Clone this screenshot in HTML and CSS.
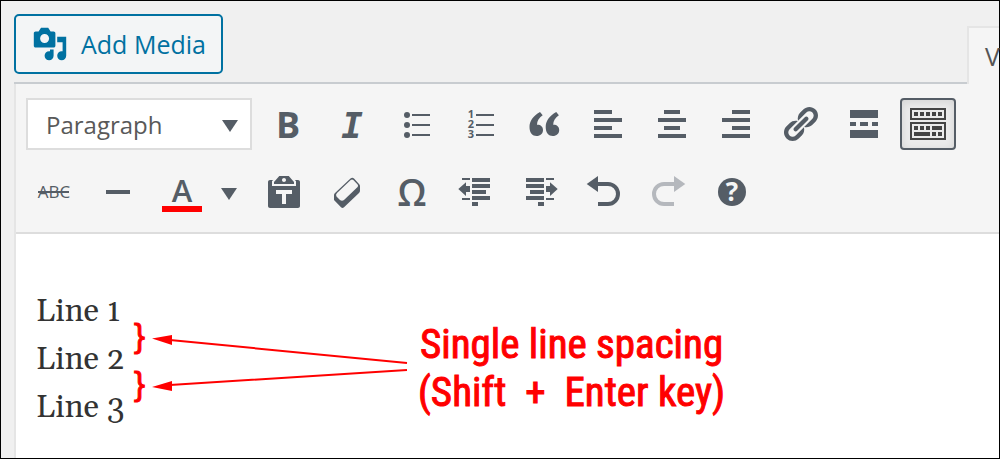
FILE: index.html
```html
<!DOCTYPE html>
<html lang="en">
<head>
<meta charset="utf-8">
<title>Editor</title>
<link rel="stylesheet" href="styles.css">
</head>
<body>
<main class="page">
  <header class="media-bar">
    <button class="add-media" type="button">
      <svg class="media-icon" viewBox="0 0 20 20" aria-hidden="true"><path d="M13 11V4c0-.55-.45-1-1-1h-1.67L9 1H5L3.67 3H2c-.55 0-1 .45-1 1v7c0 .55.45 1 1 1h10c.55 0 1-.45 1-1zM7 4.5c1.38 0 2.5 1.12 2.5 2.5S8.38 9.5 7 9.5 4.5 8.38 4.5 7 5.62 4.5 7 4.5zM14 6h5v10.5c0 1.38-1.12 2.5-2.5 2.5S14 17.88 14 16.5s1.12-2.5 2.5-2.5c.17 0 .34.02.5.05V9h-3V6zm-4 8.05V13h2v3.5c0 1.38-1.12 2.5-2.5 2.5S7 17.88 7 16.5 8.12 14 9.5 14c.17 0 .34.02.5.05z"/></svg>
      Add Media
    </button>
    <button class="tab" type="button">V</button>
  </header>
  <section class="editor">
    <div class="toolbar" role="toolbar" aria-label="Formatting">
      <div class="row">
        <div class="format">
          <select class="format-select" aria-label="Block format"><option>Paragraph</option></select>
          <svg class="format-arrow" viewBox="0 0 16 12" aria-hidden="true"><path d="M0 0h16L8 12z"/></svg>
        </div>
        <button class="tool" type="button" aria-label="Bold"><svg viewBox="0 0 40 40"><text class="glyph-bold" x="20" y="34">B</text></svg></button>
        <button class="tool" type="button" aria-label="Italic"><svg viewBox="0 0 40 40"><text class="glyph-italic" x="20" y="34">I</text></svg></button>
        <button class="tool" type="button" aria-label="Bulleted list"><svg viewBox="0 0 40 40"><circle cx="11" cy="11" r="3"/><circle cx="11" cy="21" r="3"/><circle cx="11" cy="31" r="3"/><path d="M16 10h18v2H16zM16 20h18v2H16zM16 30h18v2H16z"/></svg></button>
        <button class="tool" type="button" aria-label="Numbered list"><svg viewBox="0 0 40 40"><text class="glyph-number" x="11" y="14">1</text><text class="glyph-number" x="11" y="24">2</text><text class="glyph-number" x="11" y="34">3</text><path d="M16 10h18v2H16zM16 20h18v2H16zM16 30h18v2H16z"/></svg></button>
        <button class="tool" type="button" aria-label="Blockquote"><svg viewBox="0 0 40 40"><path d="M16 8C9 12 5.500 17 5.500 23C5.500 29 8.500 32 12.500 32C16.500 32 19 29.500 19 26C19 22.500 16.500 20.500 13 20.700C13 17 15 14 18.700 11.300ZM32.200 8C25.200 12 21.700 17 21.700 23C21.700 29 24.700 32 28.700 32C32.700 32 35.200 29.500 35.200 26C35.200 22.500 32.700 20.500 29.200 20.700C29.200 17 31.200 14 34.900 11.300Z"/></svg></button>
        <button class="tool" type="button" aria-label="Align left"><svg viewBox="0 0 40 40"><path d="M6 6h18v4H6zM6 14h28v4H6zM6 22h18v4H6zM6 30h28v4H6z"/></svg></button>
        <button class="tool" type="button" aria-label="Align center"><svg viewBox="0 0 40 40"><path d="M12 6h16v4H12zM6 14h28v4H6zM12 22h16v4H12zM6 30h28v4H6z"/></svg></button>
        <button class="tool" type="button" aria-label="Align right"><svg viewBox="0 0 40 40"><path d="M16 6h18v4H16zM6 14h28v4H6zM16 22h18v4H16zM6 30h28v4H6z"/></svg></button>
        <button class="tool" type="button" aria-label="Insert link"><svg viewBox="0 0 20 20"><path d="M17.740 2.760c1.680 1.690 1.680 4.410 0 6.100l-1.530 1.520c-1.120 1.120-2.700 1.470-4.140 1.090l2.620-2.610.76-.77.76-.76c.84-.84.84-2.200 0-3.040-.84-.85-2.200-.85-3.040 0l-.77.76-3.380 3.380c-.37-1.440-.02-3.020 1.100-4.140l1.520-1.530c1.690-1.680 4.420-1.680 6.100 0zM8.590 13.430l5.340-5.340c.42-.42.42-1.100 0-1.520-.44-.43-1.130-.39-1.530 0l-5.330 5.340c-.42.42-.42 1.100 0 1.520.44.43 1.130.39 1.520 0zm-.76 2.290l4.140-4.150c.38 1.440.03 3.020-1.090 4.140l-1.520 1.530c-1.690 1.680-4.410 1.680-6.100 0-1.680-1.680-1.680-4.420 0-6.100l1.530-1.520c1.120-1.120 2.700-1.470 4.140-1.100l-4.140 4.150c-.85.84-.85 2.200 0 3.050.84.84 2.200.84 3.040 0z"/></svg></button>
        <button class="tool" type="button" aria-label="Insert Read More tag"><svg viewBox="0 0 40 40"><path d="M6 6h28v8H6zM6 18h6v4H6zM16 18h8v4h-8zM28 18h6v4h-6zM6 26h28v8H6z"/></svg></button>
        <button class="tool tool-active" type="button" aria-label="Toolbar toggle" aria-pressed="true"><svg viewBox="0 0 40 40"><path fill-rule="evenodd" d="M2 4h36v12H2zM4 6v8h32V6zM2 18h36v18H2zM4 20v14h32V20z"/><path d="M6 8h4v4H6zM12 8h4v4h-4zM18 8h4v4h-4zM24 8h4v4h-4zM30 8h4v4h-4zM6 22h4v4H6zM12 22h4v4h-4zM18 22h4v4h-4zM24 22h10v4H24zM6 28h16v4H6zM24 28h4v4h-4zM30 28h4v4h-4z"/></svg></button>
      </div>
      <div class="row">
        <button class="tool" type="button" aria-label="Strikethrough"><svg viewBox="0 0 40 40"><text class="glyph-abc" x="20" y="26">ABC</text><path d="M4 19h31v2H4z"/></svg></button>
        <button class="tool" type="button" aria-label="Horizontal line"><svg viewBox="0 0 40 40"><path d="M8 18h24v4H8z"/></svg></button>
        <div class="color-group">
          <button class="tool" type="button" aria-label="Text color"><svg viewBox="0 0 40 40"><text class="glyph-color" x="20" y="30">A</text><path class="swatch" d="M0 34h40v6H0z"/></svg></button>
          <button class="color-menu" type="button" aria-label="Choose text color"><svg viewBox="0 0 16 40"><path d="M0 16h16L8 28z"/></svg></button>
        </div>
        <button class="tool" type="button" aria-label="Paste as text"><svg viewBox="0 0 20 20"><path d="M12.380 2L15 5v1H5V5l2.640-3h4.740zM10 5c.55 0 1-.44 1-1 0-.55-.45-1-1-1s-1 .45-1 1c0 .56.45 1 1 1zm5.450-1H17c.55 0 1 .45 1 1v12c0 .56-.45 1-1 1H3c-.55 0-1-.44-1-1V5c0-.55.45-1 1-1h1.550L4 4.630V7h12V4.630zM14 11V9H6v2h3v5h2v-5h3z"/></svg></button>
        <button class="tool" type="button" aria-label="Clear formatting"><svg viewBox="0 0 40 40"><path fill-rule="evenodd" d="M22.500 6.500L7 21Q6 22 6 23V28L13 35.300Q14.500 36.500 16 35.300L31 21Q32 20 32 18.500V14Q32 13 31 12L26 6.500Q24.300 5 22.500 6.500ZM9 21L22.700 8Q24 7 25.300 8L29.600 12.600Q30.600 14 29.600 15L16 28Q14 29.500 12 28L8.500 24.500Q7.300 22.800 9 21Z"/></svg></button>
        <button class="tool" type="button" aria-label="Special character"><svg viewBox="0 0 40 40"><text class="glyph-omega" x="20" y="34">Ω</text></svg></button>
        <button class="tool" type="button" aria-label="Decrease indent"><svg viewBox="0 0 40 40"><path d="M6 6h8v2H6zM6 26h8v2H6zM16 6h18v4H16zM16 12h18v4H16zM16 18h14v4H16zM16 24h18v4H16zM16 30h6v4h-6zM2.300 17L10 10.200V14h4v6h-4v4z"/></svg></button>
        <button class="tool" type="button" aria-label="Increase indent"><svg viewBox="0 0 40 40"><path d="M26 6h8v2h-8zM26 26h8v2h-8zM6 6h18v4H6zM6 12h18v4H6zM10 18h14v4H10zM6 24h18v4H6zM18 30h6v4h-6zM37.700 17L30 10.200V14h-4v6h4v4z"/></svg></button>
        <button class="tool" type="button" aria-label="Undo"><svg viewBox="0 0 40 40"><path d="M2.700 12L14 4v16z"/><path class="curve" d="M13 12H24a10 10 0 0 1 0 20H14"/></svg></button>
        <button class="tool tool-off" type="button" aria-label="Redo" disabled><svg viewBox="0 0 40 40"><path d="M37.300 12L26 4v16z"/><path class="curve" d="M26 12H16a10 10 0 0 0 0 20h10"/></svg></button>
        <button class="tool" type="button" aria-label="Keyboard shortcuts"><svg viewBox="0 0 40 40"><circle cx="20" cy="20" r="14"/><text class="glyph-help" x="20" y="29">?</text></svg></button>
      </div>
    </div>
    <div class="content">
      <p class="lines">Line 1<br>Line 2<br>Line 3</p>
      <div class="braces"><span>}</span><span>}</span></div>
      <svg class="arrows" viewBox="0 0 256 56" aria-hidden="true"><path class="shaft" d="M18 5L255 28M18 50L255 35"/><path d="M0 3.500L20 0v10zM0 52L20 46v10z"/></svg>
      <p class="note">Single line spacing<br>(Shift&nbsp; +&nbsp; Enter key)</p>
    </div>
  </section>
</main>
</body>
</html>
```
FILE: styles.css
```css
* {
  box-sizing: border-box;
}

body {
  margin: 0;
  font-family: "Open Sans", "Noto Sans", sans-serif;
}

button {
  margin: 0;
  padding: 0;
  border: 0;
  background: none;
  font: inherit;
}

svg {
  display: block;
  flex: none;
  overflow: visible;
}

.page {
  display: flex;
  flex-direction: column;
  min-height: 100vh;
  padding-left: 13px;
  border: 1px solid #000;
  background: #f0f0f0;
}

.media-bar {
  display: flex;
  justify-content: space-between;
  align-items: flex-end;
  padding-top: 13px;
  background: linear-gradient(#c8ccd0, #c8ccd0) bottom / 100% 2px no-repeat;
}

.add-media {
  display: flex;
  align-items: center;
  gap: 13px;
  height: 60px;
  margin-bottom: 10px;
  padding: 0 15px 0 16px;
  border: 2px solid #0071a1;
  border-radius: 5px;
  background: #f3f5f6;
  color: #0071a1;
  font-size: 25px;
  white-space: nowrap;
}

.media-icon {
  width: 36px;
  height: 36px;
  fill: #0071a1;
}

.tab {
  width: 32px;
  height: 58px;
  padding-left: 16px;
  border: solid #e5e5e5;
  border-width: 2px 0 0 2px;
  background: #f5f5f5;
  color: #555;
  font-size: 25px;
  text-align: left;
}

.editor {
  display: flex;
  flex: 1;
  flex-direction: column;
  border-left: 2px solid #e5e5e5;
  background: #fff;
}

.toolbar {
  display: flex;
  flex-direction: column;
  gap: 16px;
  padding: 14px 10px;
  border-bottom: 2px solid #ddd;
  background: #f5f5f5;
}

.row {
  display: flex;
  align-items: center;
  gap: 8px;
}

.format {
  position: relative;
  width: 226px;
}

.format-select {
  display: block;
  width: 100%;
  height: 52px;
  padding: 0 18px;
  border: 2px solid #ddd;
  border-radius: 0;
  appearance: none;
  background: #fff;
  color: #595959;
  font-family: inherit;
  font-size: 24px;
}

.format-arrow {
  position: absolute;
  top: 22px;
  right: 14px;
  width: 16px;
  height: 12px;
  fill: #555d66;
  pointer-events: none;
}

.tool {
  display: flex;
  flex: none;
  justify-content: center;
  align-items: center;
  width: 56px;
  height: 52px;
}

.tool svg {
  width: 40px;
  height: 40px;
  fill: #555d66;
}

.tool-active {
  border: 2px solid #555d66;
  border-radius: 4px;
  background: #ebebeb;
  box-shadow: inset 0 2px 8px rgba(0, 0, 0, 0.1);
}

.tool-active svg {
  fill: #444;
}

.curve {
  fill: none;
  stroke: #555d66;
  stroke-width: 4px;
}

.tool-off svg {
  fill: #b5b8bd;
}

.tool-off .curve {
  stroke: #b5b8bd;
}

.color-group {
  display: flex;
}

.color-menu {
  display: flex;
  justify-content: center;
  align-items: center;
  width: 38px;
}

.color-menu svg {
  width: 16px;
  height: 40px;
  fill: #555d66;
}

.tool text {
  text-anchor: middle;
}

.glyph-bold {
  font-size: 36px;
  font-weight: 700;
}

.glyph-italic {
  font-family: "DejaVu Sans Mono", monospace;
  font-size: 36px;
  font-style: italic;
  font-weight: 700;
}

.glyph-number {
  font-size: 11px;
  font-weight: 700;
}

.glyph-abc {
  font-size: 17px;
}

.glyph-color {
  font-size: 31px;
  font-weight: 600;
}

.swatch {
  fill: #f00;
}

.glyph-omega {
  font-size: 37px;
  font-weight: 600;
}

.glyph-help {
  fill: #f5f5f5;
  font-size: 26px;
  font-weight: 700;
}

.content {
  position: relative;
  flex: 1;
  padding: 54px 20px 26px;
}

.lines,
.note {
  margin: 0;
  line-height: 48px;
}

.lines {
  color: #333;
  font-family: Georgia, Gelasio, "Liberation Serif", serif;
  font-size: 32px;
}

.braces {
  position: absolute;
  top: 78px;
  left: 118px;
  display: flex;
  flex-direction: column;
  color: #f00;
  font-family: "Liberation Sans", Arial, sans-serif;
  font-size: 33px;
  line-height: 48px;
  -webkit-text-stroke: 1px #f00;
}

.arrows {
  position: absolute;
  top: 101px;
  left: 136px;
  width: 256px;
  height: 56px;
  fill: #f00;
}

.shaft {
  stroke: #f00;
  stroke-width: 2px;
}

.note {
  position: absolute;
  top: 86px;
  left: 402px;
  color: #f00;
  font-family: "Roboto Condensed", "Arial Narrow", sans-serif;
  font-size: 41px;
  text-align: center;
  white-space: nowrap;
  -webkit-text-stroke: 1px #f00;
}
```
